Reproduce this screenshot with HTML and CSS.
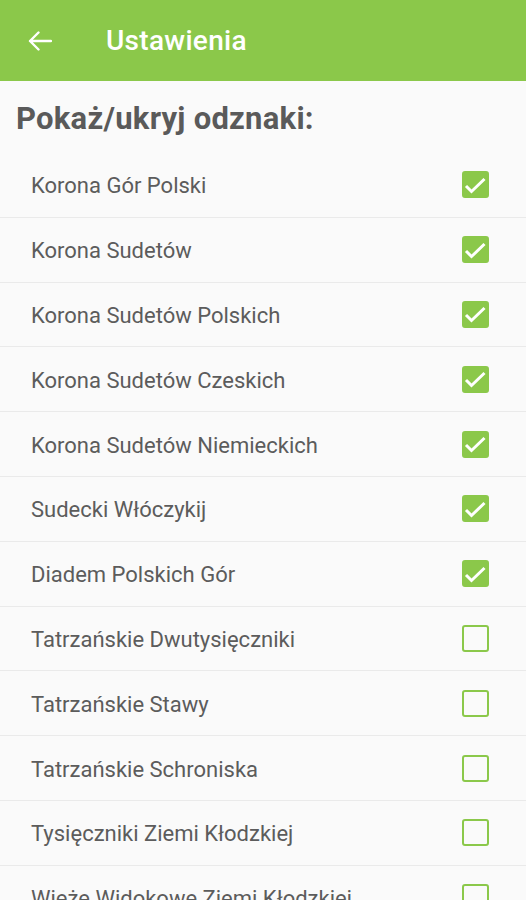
FILE: index.html
```html
<!DOCTYPE html>
<html lang="pl">
<head>
<meta charset="utf-8">
<title>Ustawienia</title>
<link rel="stylesheet" href="styles.css">
</head>
<body>
<header class="appbar">
  <svg class="back" viewBox="0 0 24 20"><path d="M23 10H2M10.5 1.5L2 10l8.5 8.5" /></svg>
  <h1 class="title">Ustawienia</h1>
</header>
<main class="content">
  <h2 class="section">Pokaż/ukryj odznaki:</h2>
  <ul class="list">
    <li class="row"><span class="label">Korona Gór Polski</span><span class="box checked"><svg viewBox="0 0 27 27"><path d="M4 15l5.5 5.5L22.5 8" /></svg></span></li>
    <li class="row"><span class="label">Korona Sudetów</span><span class="box checked"><svg viewBox="0 0 27 27"><path d="M4 15l5.5 5.5L22.5 8" /></svg></span></li>
    <li class="row"><span class="label">Korona Sudetów Polskich</span><span class="box checked"><svg viewBox="0 0 27 27"><path d="M4 15l5.5 5.5L22.5 8" /></svg></span></li>
    <li class="row"><span class="label">Korona Sudetów Czeskich</span><span class="box checked"><svg viewBox="0 0 27 27"><path d="M4 15l5.5 5.5L22.5 8" /></svg></span></li>
    <li class="row"><span class="label">Korona Sudetów Niemieckich</span><span class="box checked"><svg viewBox="0 0 27 27"><path d="M4 15l5.5 5.5L22.5 8" /></svg></span></li>
    <li class="row"><span class="label">Sudecki Włóczykij</span><span class="box checked"><svg viewBox="0 0 27 27"><path d="M4 15l5.5 5.5L22.5 8" /></svg></span></li>
    <li class="row"><span class="label">Diadem Polskich Gór</span><span class="box checked"><svg viewBox="0 0 27 27"><path d="M4 15l5.5 5.5L22.5 8" /></svg></span></li>
    <li class="row"><span class="label">Tatrzańskie Dwutysięczniki</span><span class="box"></span></li>
    <li class="row"><span class="label">Tatrzańskie Stawy</span><span class="box"></span></li>
    <li class="row"><span class="label">Tatrzańskie Schroniska</span><span class="box"></span></li>
    <li class="row"><span class="label">Tysięczniki Ziemi Kłodzkiej</span><span class="box"></span></li>
    <li class="row"><span class="label">Wieże Widokowe Ziemi Kłodzkiej</span><span class="box"></span></li>
  </ul>
</main>
</body>
</html>
```
FILE: styles.css
```css
html, body {
  margin: 0;
  padding: 0;
}
body {
  background: #fafafa;
  font-family: Roboto, "Liberation Sans", sans-serif;
  width: 526px;
  height: 900px;
  overflow: hidden;
}
.appbar {
  height: 81px;
  background: #8bc84a;
  display: flex;
  align-items: center;
  padding-left: 28px;
  box-sizing: border-box;
}
.back {
  width: 24px;
  height: 20px;
  fill: none;
  stroke: #fff;
  stroke-width: 2.4;
  stroke-linecap: round;
  stroke-linejoin: round;
}
.title {
  margin: 0 0 0 54px;
  color: #fff;
  font-size: 28px;
  font-weight: 500;
  letter-spacing: 0.3px;
}
.content {
  display: flex;
  flex-direction: column;
}
.section {
  margin: 0;
  height: 72px;
  padding: 20px 0 0 16px;
  box-sizing: border-box;
  font-size: 31px;
  font-weight: 700;
  color: #5a5a5a;
  line-height: 36px;
  letter-spacing: 0.25px;
}
.list {
  list-style: none;
  margin: 0;
  padding: 0;
}
.row {
  height: 64.8px;
  box-sizing: border-box;
  border-bottom: 1px solid #eaeaea;
  display: flex;
  align-items: center;
  justify-content: space-between;
  padding: 0 37px 0 31px;
}
.label {
  font-size: 22px;
  color: #5c5c5c;
  padding-top: 2px;
}
.box {
  width: 27px;
  height: 27px;
  box-sizing: border-box;
  border: 2.5px solid #8bc84a;
  border-radius: 3px;
  display: flex;
  align-items: center;
  justify-content: center;
  position: relative;
}
.box.checked {
  background: #8bc84a;
}
.box svg {
  position: absolute;
  left: 0;
  top: 0;
  width: 27px;
  height: 27px;
  margin: -2.5px;
  fill: none;
  stroke: #fff;
  stroke-width: 3;
}
```
